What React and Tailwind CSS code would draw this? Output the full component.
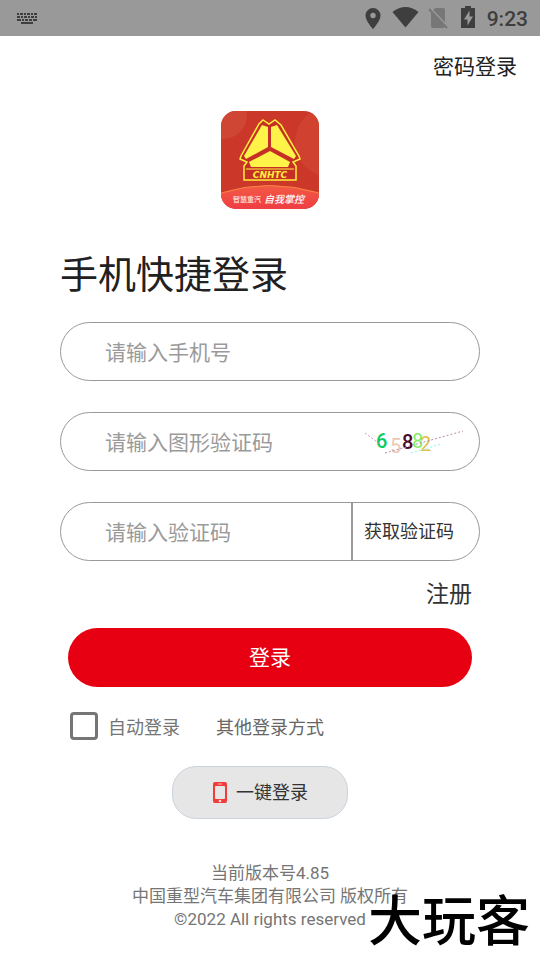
import React from 'react';

const inputText =
  'min-w-0 flex-1 bg-transparent pt-0.5 text-[21px] leading-8 text-[#212121] outline-none placeholder:text-[#9a9a9a] placeholder:opacity-100';

function StatusBar() {
  return (
    <header className="flex h-9 items-center justify-between bg-[#999999] pr-3 pl-4 text-[#3e3e3e]">
      <svg className="h-4 w-6" viewBox="0 0 24 16" fill="none" stroke="currentColor" aria-hidden="true">
        <path d="M1 4h20" strokeWidth="2" strokeDasharray="2 1 3 1 2 1 3 1" />
        <path d="M1 7h20" strokeWidth="2" strokeDasharray="3 1 2 1 3 1 2 1" />
        <path d="M1 10h4M6 10h2M9 10h3M13 10h3M17 10h4" strokeWidth="2" />
        <path d="M5 13h12" strokeWidth="2" />
      </svg>
      <div className="flex items-center">
        <svg className="h-6 w-[18px]" viewBox="0 0 18 24" fill="currentColor" aria-hidden="true">
          <path fillRule="evenodd" d="M10 2A7.500 7.500 0 0 0 2.500 9.500C2.500 15 10 23 10 23S17.500 15 17.500 9.500A7.500 7.500 0 0 0 10 2ZM10 6.800a2.700 2.700 0 1 1 0 5.400a2.700 2.700 0 0 1 0-5.400Z" />
        </svg>
        <svg className="ml-2 h-6 w-8" viewBox="0 0 32 24" fill="currentColor" aria-hidden="true">
          <path d="M3.500 6Q16.500-4 29.500 6L16.500 21.500Z" />
        </svg>
        <svg className="ml-1 h-6 w-6" viewBox="0 0 24 24" aria-hidden="true">
          <path d="M10 2h8q2 0 2 2v16q0 2-2 2H8q-2 0-2-2V7Z" fill="#777777" />
          <path d="M5 2l18 19" stroke="#999999" strokeWidth="2" />
          <path d="M4 3l18 19" stroke="#777777" strokeWidth="2" />
        </svg>
        <svg className="ml-2 h-6 w-[22px]" viewBox="0 0 22 24" aria-hidden="true">
          <path d="M8 0h6v2h4v20H4V2h4Z" fill="currentColor" />
          <path d="M12.500 4.500L7 13.500h3.500v6L16 10.500h-3.500Z" fill="#999999" />
        </svg>
        <span className="ml-2 pt-0.5 text-[21px] leading-6 font-medium">9:23</span>
      </div>
    </header>
  );
}

function AppLogo() {
  return (
    <svg className="h-[98px] w-[98px]" viewBox="0 0 98 98" role="img" aria-label="CNHTC">
      <defs>
        <clipPath id="tile">
          <rect width="98" height="98" rx="15" />
        </clipPath>
        <linearGradient id="wave" x1="0" x2="0" y1="0" y2="1">
          <stop offset="0" stopColor="#f35a45" />
          <stop offset="1" stopColor="#ee3d43" />
        </linearGradient>
      </defs>
      <g clipPath="url(#tile)">
        <rect width="98" height="98" fill="#cb3829" />
        <circle cx="2" cy="4" r="24" fill="#d04635" />
        <circle cx="109" cy="31" r="35" fill="#d0412f" />
        <path d="M0 82Q48 67 98 82V98H0Z" fill="url(#wave)" />
        <path d="M0 82Q48 67 98 82" fill="none" stroke="#f98545" />
        <path
          d="M42 9L48 13L54 9L60 14L78 45L79 48L72 51L75 55V69H23V55L26 51L19 48L20 45L38 13Z"
          fill="#c62f25"
          stroke="#fff03a"
          strokeWidth="1.500"
        />
        <path d="M41 14L47 16V36L25 48L23 45Z" fill="#fff34a" />
        <path d="M56 14L50 16V36L73 48L75 45Z" fill="#fff34a" />
        <path d="M49 40L69 51L67 56H30L28 51Z" fill="#fff34a" />
        <path d="M25 58H73" stroke="#fff03a" />
        <text x="49" y="67" textAnchor="middle" fontFamily="DejaVu Sans, sans-serif" fontSize="9" fontStyle="italic" fontWeight="700" fill="#fff03a">CNHTC</text>
        <text x="12" y="91" fontFamily="Noto Sans CJK SC, sans-serif" fontSize="7" fontWeight="700" fill="#ffd2c8">智慧重汽</text>
        <text x="43" y="92" fontFamily="Noto Sans CJK SC, sans-serif" fontSize="10" fontStyle="italic" fontWeight="500" fill="#fff">自我掌控</text>
      </g>
    </svg>
  );
}

function Captcha() {
  return (
    <svg className="h-10 w-[100px]" viewBox="0 0 100 40" role="img" aria-label="65882" fontFamily="Roboto, sans-serif" fontSize="20">
      <text x="11" y="26" fill="#0bcb5c" fontWeight="500">6</text>
      <text x="25" y="31" fill="#eac9b5">5</text>
      <text x="37" y="27" fill="#4a0929" fontWeight="500">8</text>
      <text x="47" y="26" fill="#83ee63">8</text>
      <text x="55" y="29" fill="#dfc149">2</text>
      <path d="M0 11L16 23" stroke="#dc87c8" strokeDasharray="2 2" />
      <path d="M20 31L98 9" stroke="#b98caa" strokeDasharray="2 2" />
      <path d="M46 31L76 22" stroke="#8df3ee" strokeDasharray="2 2" />
    </svg>
  );
}

function PhoneIcon() {
  return (
    <svg className="h-[22px] w-4" viewBox="0 0 16 22" aria-hidden="true">
      <rect x="1" y="0" width="14" height="21" rx="2" fill="#f13c3c" />
      <rect x="3" y="4" width="10" height="13" rx="1" fill="#e6e6e6" />
      <path d="M6 2h4" stroke="#f7b2b0" />
      <circle cx="8" cy="19" r="1.300" fill="#fbdedd" />
    </svg>
  );
}

function Field({ label, children, ...props }) {
  return (
    <div className="flex h-[59px] items-center overflow-hidden rounded-full border border-[#999999] pl-11">
      <input className={inputText} aria-label={label} placeholder={label} {...props} />
      {children}
    </div>
  );
}

export default function App() {
  return (
    <div className="relative min-h-screen overflow-hidden bg-white font-['Roboto','Noto_Sans_CJK_SC',sans-serif] text-[#212121]">
      <StatusBar />
      <nav className="flex justify-end px-[23px] pt-[15px]">
        <a href="#password" className="text-[21px] leading-8">密码登录</a>
      </nav>
      <main className="px-[60px] pt-7">
        <div className="flex justify-center">
          <AppLogo />
        </div>
        <h1 className="mt-10 text-[38px] leading-[52px]">手机快捷登录</h1>
        <form onSubmit={(event) => event.preventDefault()}>
          <div className="mt-[21px] flex flex-col gap-[31px]">
            <Field label="请输入手机号" type="tel" />
            <Field label="请输入图形验证码" type="text">
              <div className="pr-3.5">
                <Captcha />
              </div>
            </Field>
            <Field label="请输入验证码" type="text">
              <button type="button" className="h-full w-32 border-l-2 border-[#999999] pr-3.5 text-lg text-[#333333]">获取验证码</button>
            </Field>
          </div>
          <div className="px-2">
            <div className="mt-4 flex justify-end">
              <a href="#register" className="text-[23px] leading-9 text-[#333333]">注册</a>
            </div>
            <button type="submit" className="mt-[15px] h-[59px] w-full rounded-full bg-[#e60012] pt-0.5 text-[21px] text-white">登录</button>
            <div className="mt-[23px] flex items-center pl-0.5 text-lg">
              <label className="flex items-center gap-2.5 text-[#757575]">
                <input type="checkbox" className="size-7 appearance-none rounded-sm border-3 border-[#757575] checked:bg-[#757575]" />
                <span className="pt-1">自动登录</span>
              </label>
              <span className="ml-9 pt-1 text-[#666666]">其他登录方式</span>
            </div>
          </div>
          <div className="mt-6 mr-5 flex justify-center">
            <button type="button" className="flex h-[53px] w-44 items-center justify-center gap-2 rounded-3xl border border-[#ccd3de] bg-[#e6e6e6] text-lg text-[#333333]">
              <PhoneIcon />
              一键登录
            </button>
          </div>
        </form>
      </main>
      <footer className="mt-[43px] text-center text-[17px] leading-[23px] text-[#757575]">
        <p>当前版本号4.85</p>
        <p>中国重型汽车集团有限公司 版权所有</p>
        <p>©2022 All rights reserved</p>
      </footer>
      <div className="absolute right-2.5 bottom-2 text-[54px] leading-[58px] font-medium text-black">大玩客</div>
    </div>
  );
}
